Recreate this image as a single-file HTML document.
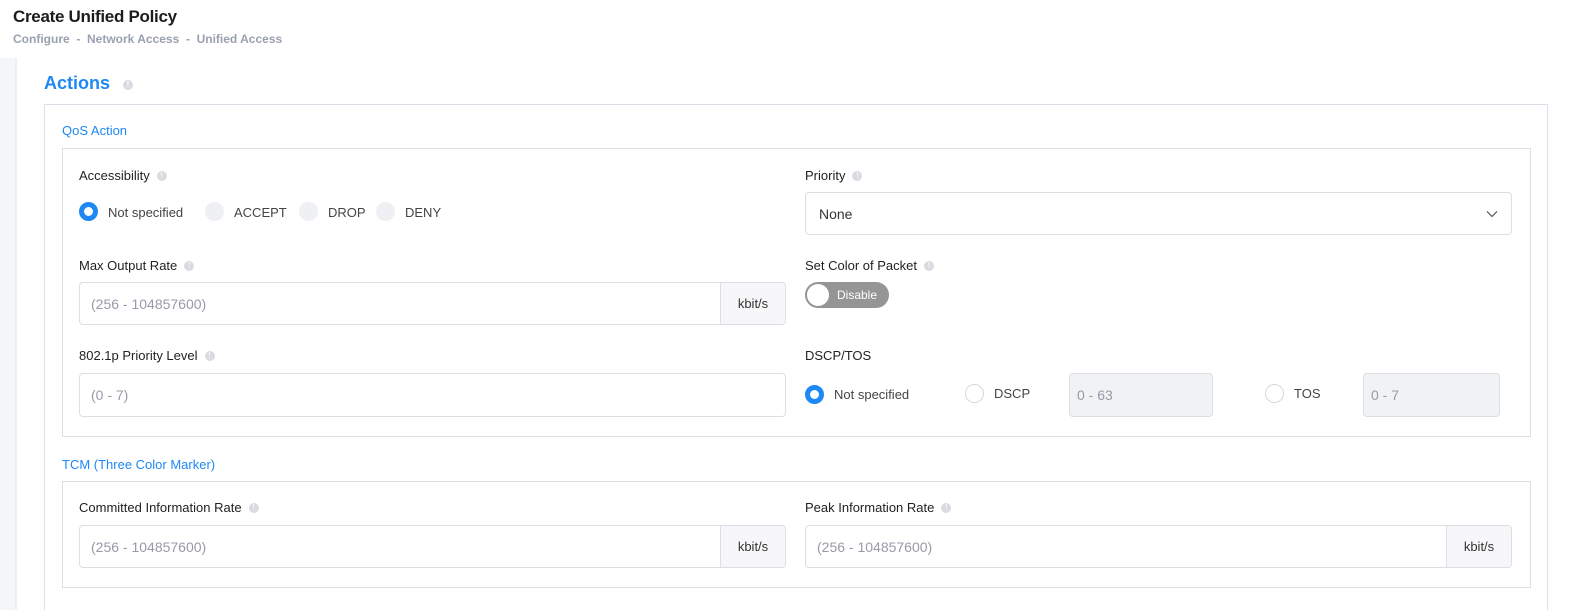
<!DOCTYPE html>
<html><head><style>
*{box-sizing:border-box;margin:0;padding:0}
html,body{width:1575px;height:610px;overflow:hidden}
body{background:#f5f6f8;font-family:"Liberation Sans",sans-serif;color:#222;position:relative}
.hdr{position:absolute;left:0;top:0;width:1575px;height:58px;background:#fff;z-index:2}
.hdr h1{position:absolute;left:13px;top:7px;font-size:17px;font-weight:bold;color:#1c1c1c;letter-spacing:-.3px}
.hdr .bc{position:absolute;left:13px;top:32px;font-size:12px;color:#9aa0b0;font-weight:bold}
.card{position:absolute;left:15px;top:58px;width:1560px;height:552px;background:#fff;border-left:2px solid #eceef2}
.a{position:absolute}
.t{position:absolute;font-size:13px;color:#222;white-space:nowrap}
.i{display:inline-block;width:10px;height:10px;border-radius:50%;background:#d9dbe0;color:#fff;font-size:8px;line-height:10px;text-align:center;vertical-align:2px;margin-left:7px}
.box{position:absolute;border:1px solid #dcdfe8}
.inp{position:absolute;border:1px solid #dcdfe6;border-radius:4px;background:#fff;font-size:14px;color:#9a9aa8;padding-left:11px;display:flex;align-items:center}
.unit{position:absolute;right:0;top:0;bottom:0;width:65px;border-left:1px solid #dcdfe6;background:#f7f7f9;color:#333;font-size:13px;display:flex;align-items:center;justify-content:center;border-radius:0 4px 4px 0}
.r{position:absolute;width:19px;height:19px;border-radius:50%;background:#eef0f3}
.rs{position:absolute;width:19px;height:19px;border-radius:50%;border:5px solid #1e88f5;background:#fff}
.ro{position:absolute;width:19px;height:19px;border-radius:50%;border:1px solid #d6d8de;background:#fff}
.dis{position:absolute;border:1px solid #dcdfe6;border-radius:4px;background:#f1f2f4;color:#9a9aa8;font-size:14px;padding-left:7px;display:flex;align-items:center}
</style></head><body>
<div class="hdr"><h1>Create Unified Policy</h1><div class="bc">Configure&nbsp; - &nbsp;Network Access&nbsp; - &nbsp;Unified Access</div></div>
<div class="card"></div>
<div class="t" style="left:44px;top:73px;font-size:18px;color:#1e88f5;font-weight:bold">Actions<span class="i" style="margin-left:13px">!</span></div>
<div class="box" style="left:44px;top:104px;width:1504px;height:520px"></div>
<div class="t" style="left:62px;top:123px;color:#1e88f5">QoS Action</div>
<div class="box" style="left:62px;top:148px;width:1469px;height:289px"></div>
<div class="t" style="left:79px;top:168px">Accessibility<span class="i">!</span></div>
<div class="rs" style="left:79px;top:202px"></div><div class="t" style="left:108px;top:205px;color:#444">Not specified</div>
<div class="r" style="left:205px;top:202px"></div><div class="t" style="left:234px;top:205px;color:#444">ACCEPT</div>
<div class="r" style="left:299px;top:202px"></div><div class="t" style="left:328px;top:205px;color:#444">DROP</div>
<div class="r" style="left:376px;top:202px"></div><div class="t" style="left:405px;top:205px;color:#444">DENY</div>
<div class="t" style="left:805px;top:168px">Priority<span class="i">!</span></div>
<div class="inp" style="left:805px;top:192px;width:707px;height:43px;color:#333;padding-left:13px">None
<svg style="position:absolute;right:13px;top:17px" width="12" height="8" viewBox="0 0 12 8"><path d="M1 1.5l5 5 5-5" fill="none" stroke="#666" stroke-width="1.3"/></svg></div>
<div class="t" style="left:79px;top:258px">Max Output Rate<span class="i">!</span></div>
<div class="inp" style="left:79px;top:282px;width:707px;height:43px">(256 - 104857600)<div class="unit">kbit/s</div></div>
<div class="t" style="left:805px;top:258px">Set Color of Packet<span class="i">!</span></div>
<div class="a" style="left:805px;top:282px;width:84px;height:26px;border-radius:13px;background:#959595"><div class="a" style="left:2px;top:2px;width:22px;height:22px;border-radius:50%;background:#fff"></div><div class="t" style="left:32px;top:6px;font-size:12px;color:#fff">Disable</div></div>
<div class="t" style="left:79px;top:348px">802.1p Priority Level<span class="i">!</span></div>
<div class="inp" style="left:79px;top:373px;width:707px;height:44px">(0 - 7)</div>
<div class="t" style="left:805px;top:348px">DSCP/TOS</div>
<div class="rs" style="left:805px;top:385px"></div><div class="t" style="left:834px;top:387px;color:#444">Not specified</div>
<div class="ro" style="left:965px;top:384px"></div><div class="t" style="left:994px;top:386px;color:#444">DSCP</div>
<div class="dis" style="left:1069px;top:373px;width:144px;height:44px">0 - 63</div>
<div class="ro" style="left:1265px;top:384px"></div><div class="t" style="left:1294px;top:386px;color:#444">TOS</div>
<div class="dis" style="left:1363px;top:373px;width:137px;height:44px">0 - 7</div>
<div class="t" style="left:62px;top:457px;color:#1e88f5">TCM (Three Color Marker)</div>
<div class="box" style="left:62px;top:481px;width:1469px;height:107px"></div>
<div class="t" style="left:79px;top:500px">Committed Information Rate<span class="i">!</span></div>
<div class="inp" style="left:79px;top:525px;width:707px;height:43px">(256 - 104857600)<div class="unit">kbit/s</div></div>
<div class="t" style="left:805px;top:500px">Peak Information Rate<span class="i">!</span></div>
<div class="inp" style="left:805px;top:525px;width:707px;height:43px">(256 - 104857600)<div class="unit">kbit/s</div></div>
</body></html>
